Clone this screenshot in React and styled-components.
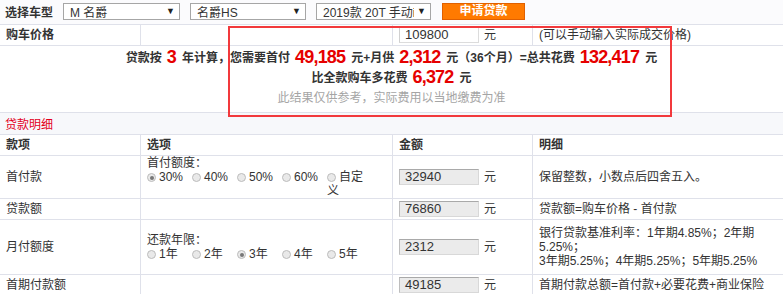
import React from 'react';
import styled, { createGlobalStyle } from 'styled-components';

const GlobalStyle = createGlobalStyle`
  html, body {
    margin: 0;
    padding: 0;
    overflow: hidden;
    background: #fff;
  }
  body {
    font-family: "Liberation Sans", Arial, "Noto Sans CJK SC", sans-serif;
    font-size: 12px;
    color: #333;
  }
`;

const Page = styled.div`
  position: relative;
  width: 783px;
`;

const TopBar = styled.div`
  display: flex;
  align-items: center;
  gap: 10px;
  height: 25px;
  box-sizing: border-box;
  padding: 0 0 2px 5px;
  background: #fbfbfd;
  border-bottom: 1px solid #dfe1ea;
`;

const Label = styled.span`
  font-weight: bold;
  font-size: 12px;
`;

const Select = styled.div`
  display: flex;
  align-items: center;
  width: ${p => p.$w}px;
  height: 17px;
  box-sizing: border-box;
  border: 1px solid #a6a6a6;
  background: #fff;
  padding: 0 4px 0 6px;
  font-size: 12px;
  color: #333;
  span {
    flex: 1;
    white-space: nowrap;
    overflow: hidden;
  }
  i {
    font-style: normal;
    font-size: 9px;
    margin-left: 3px;
    color: #222;
  }
`;

const ApplyButton = styled.button`
  width: 83px;
  height: 17px;
  margin-left: 1px;
  padding: 0;
  border: 1px solid #e06000;
  background: #ff7a00;
  color: #fff;
  font-weight: bold;
  font-size: 12px;
  font-family: inherit;
  line-height: 15px;
`;

const Row = styled.div`
  display: grid;
  grid-template-columns: 141px 252px 140px 1fr;
  height: ${p => p.$h}px;
  box-sizing: border-box;
  border-bottom: 1px solid #dfe1ea;
  background: ${p => (p.$tint ? '#f7f8fb' : '#fff')};
`;

const Cell = styled.div`
  display: flex;
  align-items: center;
  box-sizing: border-box;
  padding: 0 6px;
  border-right: 1px solid #dfe1ea;
  line-height: 14px;
  font-weight: ${p => (p.$bold ? 'bold' : 'normal')};
  &:last-child {
    border-right: none;
  }
`;

const Stack = styled.div`
  display: flex;
  flex-direction: column;
`;

const Summary = styled.div`
  height: 67px;
  box-sizing: border-box;
  padding-top: 1px;
  border-bottom: 1px solid #dfe1ea;
  text-align: center;
  font-weight: bold;
`;

const SumLine = styled.div`
  height: ${p => p.$h}px;
  line-height: ${p => p.$h}px;
  white-space: nowrap;
`;

const Num = styled.span`
  color: #e60000;
  font-size: 18px;
  letter-spacing: -0.8px;
  padding: 0 6px 0 5px;
  vertical-align: -1px;
`;

const Note = styled.div`
  height: 22px;
  line-height: 22px;
  color: #a5a5a5;
  font-weight: normal;
`;

const SectionTitle = styled.div`
  display: flex;
  align-items: center;
  height: 22px;
  box-sizing: border-box;
  padding-left: 5px;
  background: #f7f8fb;
  border-bottom: 1px solid #dfe1ea;
  color: #e3001b;
`;

const Input = styled.div`
  width: 80px;
  height: 16px;
  box-sizing: border-box;
  padding-left: 5px;
  line-height: 14px;
  font-size: 13px;
  color: #333;
  background: ${p => (p.$readonly ? '#ebebeb' : '#fff')};
  border: 1px solid ${p => (p.$readonly ? '#d8d8d8' : '#dcdcdc')};
  border-top-color: ${p => (p.$readonly ? '#a9a9a9' : '#c4c4c4')};
  border-left-color: ${p => (p.$readonly ? '#bdbdbd' : '#d0d0d0')};
`;

const Unit = styled.span`
  margin-left: 5px;
`;

const Options = styled.div`
  display: flex;
`;

const Option = styled.label`
  display: block;
  width: 45px;
  line-height: 14px;
`;

const Radio = styled.span`
  display: inline-block;
  position: relative;
  width: 9px;
  height: 9px;
  box-sizing: border-box;
  margin-right: 3px;
  vertical-align: -1px;
  border-radius: 50%;
  border: 1px solid #bcbcbc;
  background: #e9e9e9;
  &::after {
    content: '';
    display: ${p => (p.$on ? 'block' : 'none')};
    position: absolute;
    left: 1.5px;
    top: 1.5px;
    width: 4px;
    height: 4px;
    border-radius: 50%;
    background: #777;
  }
`;

const HighlightBox = styled.div`
  position: absolute;
  left: 228px;
  top: 26px;
  width: 444px;
  height: 91px;
  box-sizing: border-box;
  border: 2px solid #f2393c;
  pointer-events: none;
`;

function RadioGroup({ items, checked }) {
  return (
    <Options>
      {items.map(t => (
        <Option key={t}>
          <Radio $on={t === checked} />
          {t}
        </Option>
      ))}
    </Options>
  );
}

function MoneyCell({ value }) {
  return (
    <Cell>
      <Input $readonly>{value}</Input>
      <Unit>元</Unit>
    </Cell>
  );
}

export default function App() {
  return (
    <Page>
      <GlobalStyle />
      <TopBar>
        <Label>选择车型</Label>
        <Select $w={117}><span>M 名爵</span><i>▼</i></Select>
        <Select $w={116}><span>名爵HS</span><i>▼</i></Select>
        <Select $w={115}><span>2019款 20T 手动i</span><i>▼</i></Select>
        <ApplyButton>申请贷款</ApplyButton>
      </TopBar>

      <Row $h={21}>
        <Cell $bold>购车价格</Cell>
        <Cell />
        <Cell>
          <Input>109800</Input>
          <Unit>元</Unit>
        </Cell>
        <Cell>(可以手动输入实际成交价格)</Cell>
      </Row>

      <Summary>
        <SumLine $h={20}>
          贷款按<Num>3</Num>年计算，您需要首付<Num>49,185</Num>元+月供<Num>2,312</Num>元（36个月）=总共花费<Num>132,417</Num>元
        </SumLine>
        <SumLine $h={20}>
          比全款购车多花费<Num>6,372</Num>元
        </SumLine>
        <Note>此结果仅供参考，实际费用以当地缴费为准</Note>
      </Summary>

      <SectionTitle>贷款明细</SectionTitle>

      <Row $h={21}>
        <Cell $bold>款项</Cell>
        <Cell $bold>选项</Cell>
        <Cell $bold>金额</Cell>
        <Cell $bold>明细</Cell>
      </Row>

      <Row $h={43}>
        <Cell>首付款</Cell>
        <Cell>
          <Stack>
            <span>首付额度：</span>
            <RadioGroup items={['30%', '40%', '50%', '60%', '自定义']} checked="30%" />
          </Stack>
        </Cell>
        <MoneyCell value="32940" />
        <Cell>保留整数，小数点后四舍五入。</Cell>
      </Row>

      <Row $h={21}>
        <Cell>贷款额</Cell>
        <Cell />
        <MoneyCell value="76860" />
        <Cell>贷款额=购车价格 - 首付款</Cell>
      </Row>

      <Row $h={55}>
        <Cell>月付额度</Cell>
        <Cell>
          <Stack>
            <span>还款年限：</span>
            <RadioGroup items={['1年', '2年', '3年', '4年', '5年']} checked="3年" />
          </Stack>
        </Cell>
        <MoneyCell value="2312" />
        <Cell>
          <div>
            银行贷款基准利率：1年期4.85%；2年期5.25%；
            <br />
            3年期5.25%；4年期5.25%；5年期5.25%
          </div>
        </Cell>
      </Row>

      <Row $h={21}>
        <Cell>首期付款额</Cell>
        <Cell />
        <MoneyCell value="49185" />
        <Cell>首期付款总额=首付款+必要花费+商业保险</Cell>
      </Row>

      <HighlightBox />
    </Page>
  );
}
